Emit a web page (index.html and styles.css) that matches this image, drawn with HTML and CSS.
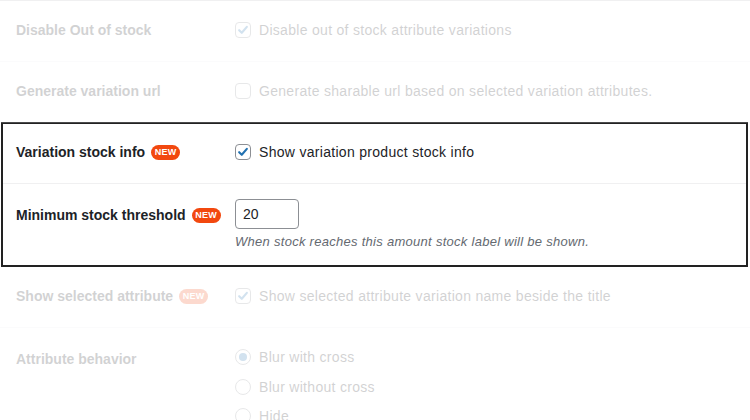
FILE: index.html
```html
<!DOCTYPE html>
<html>
<head>
<meta charset="utf-8">
<link rel="stylesheet" href="styles.css">
</head>
<body>
<div class="settings">
  <div class="row faded">
    <div class="label">Disable Out of stock</div>
    <div class="control">
      <label class="check"><span class="box checked"><svg viewBox="0 0 16 16"><path d="M3.6 8.2 L6.6 11.2 L12.4 4.4"/></svg></span>Disable out of stock attribute variations</label>
    </div>
  </div>
  <div class="row faded">
    <div class="label">Generate variation url</div>
    <div class="control">
      <label class="check"><span class="box"></span>Generate sharable url based on selected variation attributes.</label>
    </div>
  </div>
  <div class="highlight">
    <div class="row">
      <div class="label">Variation stock info <span class="badge">NEW</span></div>
      <div class="control">
        <label class="check"><span class="box checked"><svg viewBox="0 0 16 16"><path d="M3.6 8.2 L6.6 11.2 L12.4 4.4"/></svg></span>Show variation product stock info</label>
      </div>
    </div>
    <div class="row tall">
      <div class="label">Minimum stock threshold <span class="badge">NEW</span></div>
      <div class="control stack">
        <input class="num" type="text" value="20">
        <p class="desc">When stock reaches this amount stock label will be shown.</p>
      </div>
    </div>
  </div>
  <div class="row faded">
    <div class="label">Show selected attribute <span class="badge">NEW</span></div>
    <div class="control">
      <label class="check"><span class="box checked"><svg viewBox="0 0 16 16"><path d="M3.6 8.2 L6.6 11.2 L12.4 4.4"/></svg></span>Show selected attribute variation name beside the title</label>
    </div>
  </div>
  <div class="row faded last">
    <div class="label">Attribute behavior</div>
    <div class="control radios">
      <label class="check"><span class="radio on"></span>Blur with cross</label>
      <label class="check"><span class="radio"></span>Blur without cross</label>
      <label class="check"><span class="radio"></span>Hide</label>
    </div>
  </div>
</div>
</body>
</html>
```

FILE: styles.css
```css
html, body {
  margin: 0;
  padding: 0;
  background: #ffffff;
  overflow: hidden;
}
body {
  font-family: "Liberation Sans", Arial, sans-serif;
  font-size: 14px;
  color: #1d2327;
  width: 750px;
  height: 420px;
}
.settings {
  border-top: 1px solid #f0f0f1;
}
.row {
  display: grid;
  grid-template-columns: 219px 1fr;
  padding: 0 16px 2px;
  height: 58px;
  align-items: center;
  border-bottom: 1px solid #f0f0f1;
}
.faded {
  opacity: 0.2;
}
.label {
  font-weight: bold;
  line-height: 20px;
  display: flex;
  align-items: center;
  white-space: nowrap;
}
.badge {
  display: inline-block;
  margin-left: 6px;
  background: #f2480f;
  color: #ffffff;
  font-size: 9px;
  font-weight: bold;
  line-height: 15px;
  height: 15px;
  width: 29px;
  text-align: center;
  border-radius: 8px;
  letter-spacing: 0.3px;
}
.check {
  display: flex;
  align-items: center;
  line-height: 20px;
  white-space: nowrap;
  letter-spacing: 0.3px;
}
.box {
  width: 14px;
  height: 14px;
  border: 1px solid #8c8f94;
  border-radius: 4px;
  margin-right: 8px;
  background: #fff;
  display: inline-flex;
  flex: none;
}
.box svg {
  width: 14px;
  height: 14px;
}
.box svg path {
  fill: none;
  stroke: #2271b1;
  stroke-width: 2.4;
  stroke-linecap: round;
  stroke-linejoin: round;
}
.highlight {
  border: 2px solid #222222;
  margin: -1px 2px 0 1px;
}
.highlight .row {
  height: 56px;
  padding: 0 13px 3px;
}
.highlight .row.tall {
  height: auto;
  border-bottom: none;
  align-items: start;
  padding-top: 15px;
  padding-bottom: 14px;
}
.highlight .row.tall .label {
  padding-top: 6px;
}
.stack {
  display: flex;
  flex-direction: column;
  align-items: flex-start;
}
.num {
  width: 64px;
  height: 30px;
  box-sizing: border-box;
  border: 1px solid #8c8f94;
  border-radius: 4px;
  padding: 0 7px;
  font-family: "Liberation Sans", Arial, sans-serif;
  font-size: 14px;
  color: #1d2327;
  margin: 0;
}
.desc {
  margin: 4px 0 0;
  font-size: 13px;
  line-height: 18px;
  font-style: italic;
  color: #646970;
  letter-spacing: 0.28px;
}
.row.last {
  height: auto;
  align-items: start;
  padding-top: 19px;
  border-bottom: none;
}
.row.last .label {
  padding-top: 2px;
}
.radios {
  display: flex;
  flex-direction: column;
  gap: 9.5px;
}
.radio {
  width: 14px;
  height: 14px;
  border: 1px solid #8c8f94;
  border-radius: 50%;
  margin-right: 8px;
  flex: none;
  display: inline-flex;
  align-items: center;
  justify-content: center;
}
.radio.on::after {
  content: "";
  width: 8px;
  height: 8px;
  border-radius: 50%;
  background: #2271b1;
}
```
